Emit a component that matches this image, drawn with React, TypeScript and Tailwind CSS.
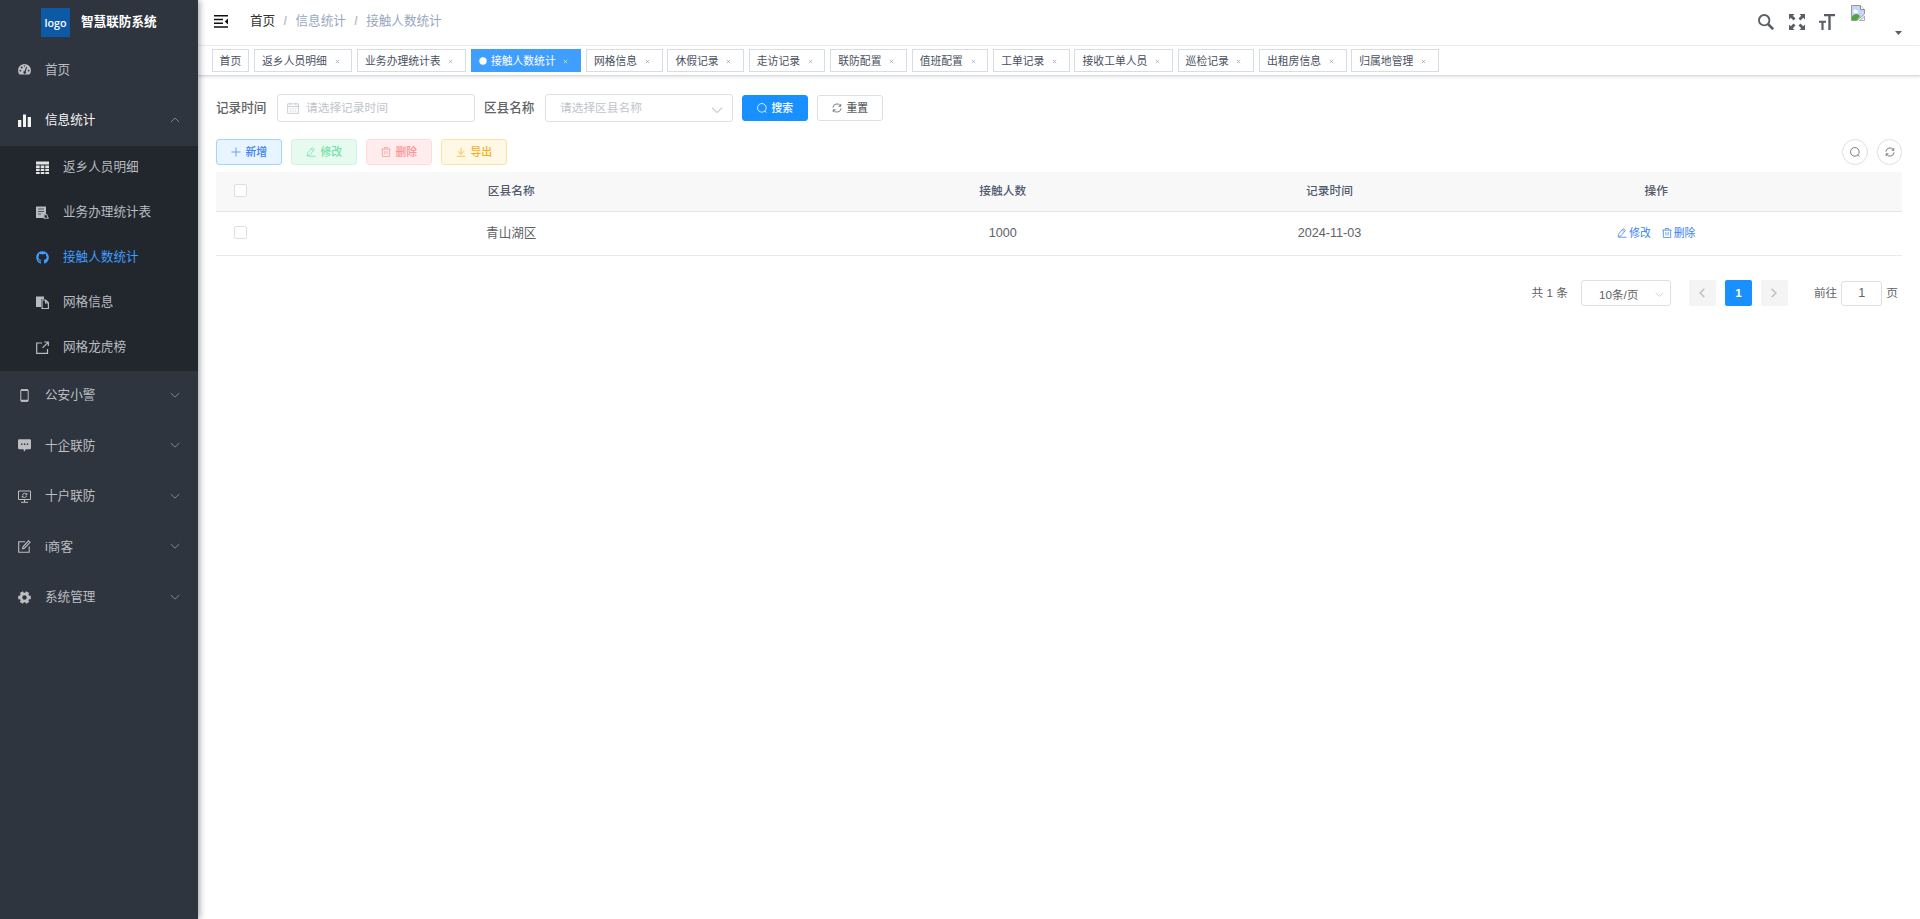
import React, { useState } from 'react';
import clsx from 'clsx';
import { FaGithub } from 'react-icons/fa';

const icons: Record<string, React.ReactNode> = {
  dashboard: (
    <>
      <path d="M1.500 11.600A6.400 6.400 0 0 1 0.100 7.300a6.400 6.400 0 0 1 12.800 0 6.400 6.400 0 0 1-1.400 4.300z" fill="currentColor" stroke="none" />
      <g fill="#2f353f" stroke="none">
        <circle cx="2.400" cy="7.600" r="0.900" />
        <circle cx="3.700" cy="4.500" r="0.900" />
        <circle cx="6.500" cy="2.900" r="0.700" />
        <circle cx="10.600" cy="7.600" r="0.900" />
        <path d="M8.200 3.800l.9.400-1.400 4.200a1.400 1.400 0 1 1-1.100-.4z" />
      </g>
    </>
  ),
  chart: <path d="M0 6h3.300v7H0zM5 .5h3V13H5zM9.700 3H13v10H9.700z" fill="currentColor" stroke="none" />,
  table: (
    <path
      d="M0 .5h13v3H0zM0 4.500h3.700v2.400H0zM4.700 4.500h3.600v2.400H4.700zM9.300 4.500H13v2.400H9.300zM0 7.800h3.700v2.300H0zM4.700 7.800h3.600v2.300H4.700zM9.300 7.800H13v2.300H9.300zM0 11h3.700v2H0zM4.700 11h3.600v2H4.700zM9.300 11H13v2H9.300z"
      fill="#e3e4e5"
      stroke="none"
    />
  ),
  form: (
    <>
      <path d="M0 .5h10v8H8.500V12H0z" fill="currentColor" stroke="none" />
      <path d="M2 3h6M2 5.500h6M2 8h3" stroke="#22272d" strokeWidth="0.700" />
      <path d="M9 9.500l1.500-1.500 1.200 3 .8 1.200H7.500" strokeWidth="1" />
    </>
  ),
  github: <FaGithub size={13} strokeWidth={0} />,
  copy: (
    <>
      <path d="M0 .5h8v2.800H5V11H0z" fill="currentColor" stroke="none" />
      <path d="M6 4h3.700l2.700 2.800v5.700H6zM9.500 4v3h2.900" strokeWidth="1.200" />
    </>
  ),
  link: <path d="M6 2H.7v10.400h10.800V8M8.300 1h4v4M12 1.300L6.500 6.800" strokeWidth="1.200" />,
  phone: (
    <>
      <rect x="2.800" y="0.600" width="7.400" height="12" rx="0.900" strokeWidth="1" />
      <path d="M3 1.300h7M3 11.500h7" strokeWidth="1.400" />
    </>
  ),
  message: (
    <>
      <path d="M1.200.3h10.600A1.200 1.200 0 0 1 13 1.500v7.600a1.200 1.200 0 0 1-1.200 1.200H8L6 12.800l-.5-2.500H1.200A1.200 1.200 0 0 1 0 9.100V1.500A1.200 1.200 0 0 1 1.200.3z" fill="currentColor" stroke="none" />
      <path d="M3 5.300h1.400M5.900 5.300h1.400M8.800 5.300h1.400" stroke="#2f353f" strokeWidth="1.500" />
    </>
  ),
  monitor: (
    <>
      <path d="M.5 1h12v8.500H.5zM6.500 9.500v2.600M3 12.300h7" />
      <path d="M8.700 4.600a2.300 2.300 0 0 0-4.300.4M4.300 6.200a2.300 2.300 0 0 0 4.300-.4M8.800 3v1.800H7.300M4.200 7.600V6h1.500" strokeWidth="0.900" />
    </>
  ),
  edit: <path d="M7 1.800H.7v10.500h10.500V6.500M4.500 8.800l.5-2L10.500.9l1.500 1.400-5.600 5.900z" strokeWidth="1.100" />,
  gear: (
    <>
      <circle cx="6.500" cy="6.500" r="4.800" fill="currentColor" stroke="none" />
      <path d="M.2 6.500h12.600M3.350 1.050l6.300 10.900M9.650 1.050l-6.300 10.900" strokeWidth="3.600" />
      <circle cx="6.500" cy="6.500" r="2.200" fill="#2f353f" stroke="none" />
    </>
  ),
  search: <path d="M10 10.200l2.200 2.300M11.900 6.300a5.600 5.600 0 1 1-11.200 0 5.600 5.600 0 0 1 11.200 0z" strokeWidth="1.100" />,
  refresh: <path d="M1.200 6A5.300 5.300 0 0 1 11 3.700M11.800 7A5.300 5.300 0 0 1 2 9.300M11.400 1.200V4.200H8.400M1.600 11.800V8.800h3" strokeWidth="1.100" />,
  plus: <path d="M6.500 .5v12M.5 6.500h12" strokeWidth="0.900" />,
  pen: <path d="M2 12h10.500M1.500 11.500l.5-3.600L8 .8l2.900 2.300-5.700 7zM6.700 2.400l2.900 2.300" strokeWidth="1" />,
  trash: <path d="M.3 2.800h12.400M4.300 2.600V.7h4.400v1.900M1.800 2.900v9.500h9.400V2.900M5 5.300v4.400M8 5.300v4.400" strokeWidth="1" />,
  download: <path d="M1 12h11M6.500 1v8.300M2.500 5.500l4 4 4-4" strokeWidth="1" />,
  calendar: <path d="M.7 2h11.600v10.300H.7zM.7 4.800h11.600M3.500.7v2.300M9.500.7v2.300M3 7.300h1.500M5.800 7.300h1.500M8.600 7.300h1.500M3 9.800h1.500M5.800 9.800h1.500M8.600 9.800h1.500" strokeWidth="0.900" />,
  down: <path d="M1 4l5.500 5.300L12 4" strokeWidth="1.100" />,
  up: <path d="M1 9.300L6.500 4 12 9.300" strokeWidth="1.100" />,
  left: <path d="M9 2L4.500 6.500 9 11" strokeWidth="1.800" />,
  right: <path d="M4 2l4.500 4.500L4 11" strokeWidth="1.800" />,
  close: <path d="M2 2l9 9M11 2l-9 9" strokeWidth="1.500" />,
};

function Icon({ name, className }: { name: string; className?: string }) {
  return (
    <svg viewBox="0 0 13 13" fill="none" stroke="currentColor" className={clsx('shrink-0', className)}>
      {icons[name]}
    </svg>
  );
}

const subMenu = [
  { icon: 'table', title: '返乡人员明细' },
  { icon: 'form', title: '业务办理统计表' },
  { icon: 'github', title: '接触人数统计' },
  { icon: 'copy', title: '网格信息' },
  { icon: 'link', title: '网格龙虎榜' },
];

const menu = [
  { icon: 'phone', title: '公安小警' },
  { icon: 'message', title: '十企联防' },
  { icon: 'monitor', title: '十户联防' },
  { icon: 'edit', title: 'i商客' },
  { icon: 'gear', title: '系统管理' },
];

const tags = [
  '首页', '返乡人员明细', '业务办理统计表', '接触人数统计', '网格信息', '休假记录', '走访记录',
  '联防配置', '值班配置', '工单记录', '接收工单人员', '巡检记录', '出租房信息', '归属地管理',
];

function MenuItem({ icon, title, arrow, active }: { icon: string; title: string; arrow?: string; active?: boolean }) {
  return (
    <div className={clsx('flex h-[50.4px] items-center pb-px pl-[18px] pr-[18px]', active ? 'text-[#f4f4f5]' : 'text-[#bcbec1]')}>
      <Icon name={icon} className="h-[13px] w-[13px]" />
      <span className="ml-[14px] flex-1">{title}</span>
      {arrow && <Icon name={arrow} className="mb-px h-[10px] w-[10px] text-[#909399]" />}
    </div>
  );
}

function Sidebar({ current }: { current: string }) {
  return (
    <aside className="z-10 w-[198px] shrink-0 bg-[#2f353f] shadow-[2px_0_6px_rgba(0,21,41,0.35)]">
      <div className="flex h-[45px] items-center pl-[41px]">
        <div className="flex h-[29px] w-[29px] items-center justify-center bg-[#0c5aa6] font-['Open_Sans'] text-[10.800px] font-semibold text-white">
          logo
        </div>
        <h1 className="ml-[11px] pb-[2px] text-[12.600px] font-bold text-white">智慧联防系统</h1>
      </div>
      <MenuItem icon="dashboard" title="首页" />
      <MenuItem icon="chart" title="信息统计" arrow="up" active />
      <div className="bg-[#22272d]">
        {subMenu.map((item) => (
          <div
            key={item.title}
            className={clsx('flex h-[45px] items-center pb-[2px] pl-[36px]', item.title === current ? 'text-[#409eff]' : 'text-[#b8bcc0]')}
          >
            <Icon name={item.icon} className="h-[13px] w-[13px]" />
            <span className="ml-[14px]">{item.title}</span>
          </div>
        ))}
      </div>
      {menu.map((item) => (
        <MenuItem key={item.title} icon={item.icon} title={item.title} arrow="down" />
      ))}
    </aside>
  );
}

function Navbar() {
  return (
    <header className="flex h-[46px] items-center border-b border-[#f0f1f3] pl-[16px] pr-[18px]">
      <svg viewBox="0 0 14 13" className="mb-[3px] h-[13px] w-[14px]">
        <path d="M0 0h14v1.500H0zM0 3.800h9v1.400H0zM0 7.500h9v1.400H0zM0 11.300h14v1.500H0zM14 3.500v6l-3.200-3z" fill="#111" />
      </svg>
      <nav className="ml-[22px] flex pb-[3px] text-[#97a8be]">
        <span className="text-[#303133]">首页</span>
        <span className="mx-[8.400px] font-bold text-[#c0c4cc]">/</span>
        <span>信息统计</span>
        <span className="mx-[8.400px] font-bold text-[#c0c4cc]">/</span>
        <span>接触人数统计</span>
      </nav>
      <div className="ml-auto flex h-full text-[#5a5e66]">
        <svg viewBox="0 0 16 16" className="mt-[14px] h-[16px] w-[16px]" fill="none" stroke="currentColor">
          <circle cx="6.200" cy="6.200" r="5.200" strokeWidth="1.900" />
          <path d="M10 10l5.200 5.200" strokeWidth="2.600" />
        </svg>
        <svg viewBox="0 0 16 16" className="ml-[15px] mt-[14px] h-[16px] w-[16px]" fill="currentColor">
          <path d="M0 0h5.500L3.800 1.800l2.700 2.700-2 2-2.700-2.700L0 5.500zM16 0v5.500l-1.800-1.700-2.700 2.700-2-2 2.700-2.700L10.500 0zM0 16v-5.500l1.800 1.700 2.700-2.700 2 2-2.700 2.700L5.500 16zM16 16h-5.500l1.700-1.800-2.700-2.700 2-2 2.700 2.700 1.800-1.700z" />
        </svg>
        <svg viewBox="0 0 16 16" className="ml-[14px] mt-[14px] h-[16px] w-[16px]" fill="currentColor">
          <path d="M5 0h11v2.300h-4.300V16H9.300V2.300H5zM0 6.700h7v2H4.600V16H2.400V8.700H0z" />
        </svg>
        <svg viewBox="0 0 14 16" className="ml-[16px] mt-[5px] h-[16px] w-[14px]">
          <path d="M.5.5h9l4 4V9L6 15.500H.5z" fill="#c6d7f5" stroke="#9a9a9a" />
          <path d="M9.500.5v4h4" fill="#fff" stroke="#8a8a8a" />
          <path d="M2.500 6a1.500 1.500 0 0 1 2.900-.6A1.300 1.300 0 0 1 6 8H3z" fill="#fff" />
          <path d="M1 15v-3.500c3-3.500 6-3 8-.5L6 15z" fill="#4da63c" />
          <path d="M8.500 15.500l5-4.300v4.300z" fill="#e9eef8" stroke="#9a9a9a" strokeWidth="0.800" />
        </svg>
        <svg viewBox="0 0 7 4" className="ml-[30px] mt-[31px] h-[4px] w-[7px]">
          <path d="M0 0h7L3.500 4z" fill="#5a5e66" />
        </svg>
      </div>
    </header>
  );
}

function TagsView({ current, onSelect }: { current: string; onSelect: (tag: string) => void }) {
  return (
    <div className="flex h-[30px] gap-[4.680px] border-b border-[#d8dce5] pl-[13.500px] pt-[3px] shadow-[0_1px_3px_0_rgba(0,0,0,0.12)]">
      {tags.map((tag) => (
        <div
          key={tag}
          onClick={() => onSelect(tag)}
          className={clsx(
            'flex h-[23px] cursor-pointer items-center whitespace-nowrap border px-[7.100px] text-[10.800px]',
            tag === current ? 'border-[#409eff] bg-[#409eff] text-white' : 'border-[#d8dce5] bg-white text-[#495060]',
          )}
        >
          {tag === current && (
            <svg viewBox="0 0 8 8" className="mr-[4px] h-[8px] w-[8px]">
              <circle cx="4" cy="4" r="3.700" fill="#fff" />
            </svg>
          )}
          {tag}
          {tag !== '首页' && (
            <span className="ml-[3px] flex w-[14.400px] justify-center">
              <Icon name="close" className={clsx('mt-px h-[5px] w-[5px]', tag === current ? 'text-white' : 'text-[#8a8f99]')} />
            </span>
          )}
        </div>
      ))}
    </div>
  );
}

function Button({ icon, className, children }: { icon: string; className: string; children: React.ReactNode }) {
  return (
    <button className={clsx('flex h-[26px] w-[66px] items-center justify-center gap-[4.500px] rounded-[3px] border text-[10.800px] font-medium', className)}>
      <Icon name={icon} className="h-[10px] w-[10px]" />
      {children}
    </button>
  );
}

function Checkbox() {
  return <span className="block h-[13px] w-[13px] rounded-[2px] border border-[#dcdfe6] bg-white" />;
}

const cols = 'grid grid-cols-[49.500px_1fr_1fr_162px_1fr] items-center pb-[2px] text-center border-b';

export default function App() {
  const [current, setCurrent] = useState('接触人数统计');

  return (
    <div className="flex h-[919px] w-[1920px] overflow-hidden bg-white font-['Liberation_Sans','Noto_Sans_CJK_SC',sans-serif] text-[12.600px] leading-[18px]">
      <Sidebar current="接触人数统计" />
      <main className="min-w-0 flex-1">
        <Navbar />
        <TagsView current={current} onSelect={setCurrent} />

        <div className="px-[18px] pt-[18px] text-[#606266]">
          <div className="flex h-[28px] items-center">
            <label className="w-[61px] pb-px font-medium">记录时间</label>
            <div className="flex h-[28px] w-[198px] items-center rounded-[3px] border border-[#dcdfe6] pl-[9px] text-[11.700px] text-[#c0c4cc]">
              <Icon name="calendar" className="h-[12px] w-[12px]" />
              <span className="ml-[7px]">请选择记录时间</span>
            </div>
            <label className="ml-[9px] w-[61px] pb-px font-medium">区县名称</label>
            <div className="flex h-[28px] w-[188px] items-center justify-between rounded-[3px] border border-[#dcdfe6] pl-[14px] pr-[9px] text-[11.700px] text-[#c0c4cc]">
              请选择区县名称
              <Icon name="down" className="mt-[4px] h-[12px] w-[12px]" />
            </div>
            <div className="ml-[9px] flex gap-[9px]">
              <Button icon="search" className="border-[#1890ff] bg-[#1890ff] text-white">搜索</Button>
              <Button icon="refresh" className="border-[#dcdfe6] bg-white text-[#606266]">重置</Button>
            </div>
          </div>

          <div className="mt-[17px] flex h-[26px] gap-[9px]">
            <Button icon="plus" className="border-[#a3d3ff] bg-[#e8f4ff] text-[#3b82f0]">新增</Button>
            <Button icon="pen" className="border-[#d0f5e0] bg-[#e7faf0] text-[#71e2a3]">修改</Button>
            <Button icon="trash" className="border-[#ffdbdb] bg-[#ffeded] text-[#ff9292]">删除</Button>
            <Button icon="download" className="border-[#ffe399] bg-[#fff8e6] text-[#f5b118]">导出</Button>
            <div className="ml-auto flex gap-[9px]">
              <button className="flex h-[26px] w-[26px] items-center justify-center rounded-full border border-[#dcdfe6]">
                <Icon name="search" className="h-[10px] w-[10px]" />
              </button>
              <button className="flex h-[26px] w-[25px] items-center justify-center rounded-full border border-[#dcdfe6]">
                <Icon name="refresh" className="h-[10px] w-[10px]" />
              </button>
            </div>
          </div>

          <div className="mt-[7px]">
            <div className={clsx(cols, 'h-[40px] border-[#dfe6ec] bg-[#f8f8f9] text-[11.700px] font-medium text-[#515a6e]')}>
              <div className="flex justify-center"><Checkbox /></div>
              <div>区县名称</div>
              <div>接触人数</div>
              <div>记录时间</div>
              <div>操作</div>
            </div>
            <div className={clsx(cols, 'h-[44px] border-[#e6ebf0]')}>
              <div className="flex justify-center"><Checkbox /></div>
              <div>青山湖区</div>
              <div>1000</div>
              <div>2024-11-03</div>
              <div className="flex justify-center gap-[11px] text-[10.800px] text-[#3b82f0]">
                <a className="flex items-center gap-[2px]"><Icon name="pen" className="h-[10px] w-[10px]" />修改</a>
                <a className="flex items-center gap-[2px]"><Icon name="trash" className="h-[10px] w-[10px]" />删除</a>
              </div>
            </div>
          </div>

          <div className="mt-[24px] flex h-[26px] items-center justify-end pr-[4px] text-[11.700px]">
            <span className="mr-[13px]">共 1 条</span>
            <div className="mr-[18px] flex h-[26px] w-[90px] items-center justify-between rounded-[3px] border border-[#dcdfe6] pl-[17px] pr-[6px]">
              <span className="pt-[3px]">10条/页</span>
              <Icon name="down" className="mt-[2px] h-[9px] w-[9px] text-[#c0c4cc]" />
            </div>
            <div className="mr-[26px] flex gap-[9px]">
              <button className="flex h-[26px] w-[27px] items-center justify-center rounded-[2px] bg-[#f4f4f5] text-[#c0c4cc]">
                <Icon name="left" className="h-[12px] w-[12px]" />
              </button>
              <button className="h-[26px] w-[27px] rounded-[2px] bg-[#1890ff] font-bold text-white">1</button>
              <button className="flex h-[26px] w-[27px] items-center justify-center rounded-[2px] bg-[#f4f4f5] text-[#c0c4cc]">
                <Icon name="right" className="h-[12px] w-[12px]" />
              </button>
            </div>
            前往
            <span className="mx-[4px] flex h-[25px] w-[41px] items-center justify-center rounded-[3px] border border-[#dcdfe6] text-[12.600px]">1</span>
            页
          </div>
        </div>
      </main>
    </div>
  );
}
